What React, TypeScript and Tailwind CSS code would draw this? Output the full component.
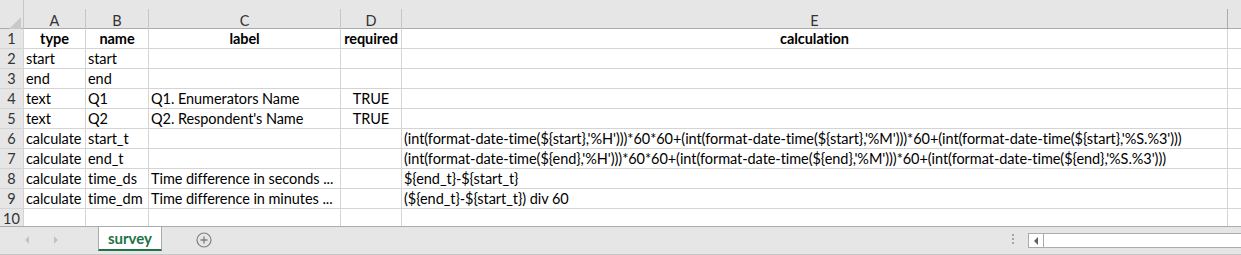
import React from 'react';

const cols = ['A', 'B', 'C', 'D', 'E'];

type Row = {
    cells: string[];
    bold?: boolean;
};

const rows: Row[] = [
    { cells: ['type', 'name', 'label', 'required', 'calculation'], bold: true },
    { cells: ['start', 'start', '', '', ''] },
    { cells: ['end', 'end', '', '', ''] },
    { cells: ['text', 'Q1', 'Q1. Enumerators Name', 'TRUE', ''] },
    { cells: ['text', 'Q2', "Q2. Respondent's Name", 'TRUE', ''] },
    {
        cells: [
            'calculate',
            'start_t',
            '',
            '',
            "(int(format-date-time(${start},'%H')))*60*60+(int(format-date-time(${start},'%M')))*60+(int(format-date-time(${start},'%S.%3')))",
        ],
    },
    {
        cells: [
            'calculate',
            'end_t',
            '',
            '',
            "(int(format-date-time(${end},'%H')))*60*60+(int(format-date-time(${end},'%M')))*60+(int(format-date-time(${end},'%S.%3')))",
        ],
    },
    {
        cells: [
            'calculate',
            'time_ds',
            'Time difference in seconds ...',
            '',
            '${end_t}-${start_t}',
        ],
    },
    {
        cells: [
            'calculate',
            'time_dm',
            'Time difference in minutes ...',
            '',
            '(${end_t}-${start_t}) div 60',
        ],
    },
    { cells: ['', '', '', '', ''] },
];

const gridCols = 'grid grid-cols-[24px_62px_63px_192px_61px_826px_1fr]';

const HeaderRow = () => (
    <div className={`${gridCols} h-[29px] border-b border-[#ababab] bg-[#e6e6e6]`}>
        <div className="flex items-end border-r border-[#c6c6c6] pb-[1px]">
            <svg width="23" height="16" viewBox="0 0 23 16">
                <path d="M8 15L21 15L21 2Z" fill="#c9c9c9" />
            </svg>
        </div>
        {cols.map((c) => (
            <div key={c} className="mt-[9px] flex items-center justify-center border-r border-[#c6c6c6] pt-[1px] text-[14.5px] text-[#333]">
                {c}
            </div>
        ))}
        <div className="mt-[9px] -ml-[1px] border-l border-[#ababab]" />
    </div>
);

const SheetRow = ({ row, idx }: { row: Row; idx: number }) => {
    const align = (i: number) => {
        if (row.bold) return 'justify-center font-bold';
        if (i === 3) return 'justify-center';
        return 'justify-start pl-[2px]';
    };
    return (
        <div className={`${gridCols} h-[20px]`}>
            <div className="flex items-end justify-center border-b border-r border-[#d4d4d4] bg-[#e6e6e6] pb-[1px] text-[14.5px] leading-[17px] text-[#333]">
                {idx + 1}
            </div>
            {row.cells.map((cell, i) => (
                <div
                    key={i}
                    className={`flex items-end overflow-visible whitespace-nowrap border-b border-r border-[#d4d4d4] pb-[1px] text-[14.5px] leading-[17px] tracking-[-0.06px] text-black ${align(i)}`}
                >
                    {cell}
                </div>
            ))}
            <div className="border-b border-[#d4d4d4]" />
        </div>
    );
};

const TabBar = () => (
    <div className="flex h-[29px] items-stretch border-t border-b border-t-[#ababab] border-b-[#c6c6c6] bg-[#e6e6e6]">
        <div className="flex w-[98px] items-center pb-[1px]">
            <div className="ml-[25px] h-0 w-0 border-y-[4px] border-r-[4px] border-y-transparent border-r-[#c3c3c3]" />
            <div className="ml-[25px] h-0 w-0 border-y-[4px] border-l-[4px] border-y-transparent border-l-[#c3c3c3]" />
        </div>
        <div className="mb-[3px] flex w-[64px] items-center justify-center border-x border-b-2 border-x-[#ababab] border-b-[#217346] bg-white pt-[1px] text-[15px] font-bold text-[#217346]">
            survey
        </div>
        <div className="flex items-center pb-[2px] pl-[34px]">
            <svg width="16" height="16" viewBox="0 0 16 16">
                <circle cx="8" cy="8" r="7" fill="none" stroke="#808080" strokeWidth="1.2" />
                <path d="M8 4.5v7M4.5 8h7" stroke="#808080" strokeWidth="1.4" />
            </svg>
        </div>
        <div className="flex-1" />
        <div className="flex flex-col items-center justify-center gap-[2px] pb-[3px] pr-[14px]">
            <div className="h-[2px] w-[2px] bg-[#a6a6a6]" />
            <div className="h-[2px] w-[2px] bg-[#a6a6a6]" />
            <div className="h-[2px] w-[2px] bg-[#a6a6a6]" />
        </div>
        <div className="my-[6px] flex w-[213px] border border-r-0 border-[#ababab] bg-white">
            <div className="flex w-[15px] items-center justify-center border-r border-[#ababab]">
                <div className="h-0 w-0 border-y-[4px] border-r-[4px] border-y-transparent border-r-[#606060]" />
            </div>
        </div>
    </div>
);

export default function App() {
    return (
        <div
            className="h-[255px] w-[1241px] overflow-hidden bg-white"
            style={{ fontFamily: 'Lato, "Liberation Sans", sans-serif' }}
        >
            <div className="h-[226px] overflow-hidden">
                <HeaderRow />
                {rows.map((r, i) => (
                    <SheetRow key={i} row={r} idx={i} />
                ))}
            </div>
            <TabBar />
        </div>
    );
}
